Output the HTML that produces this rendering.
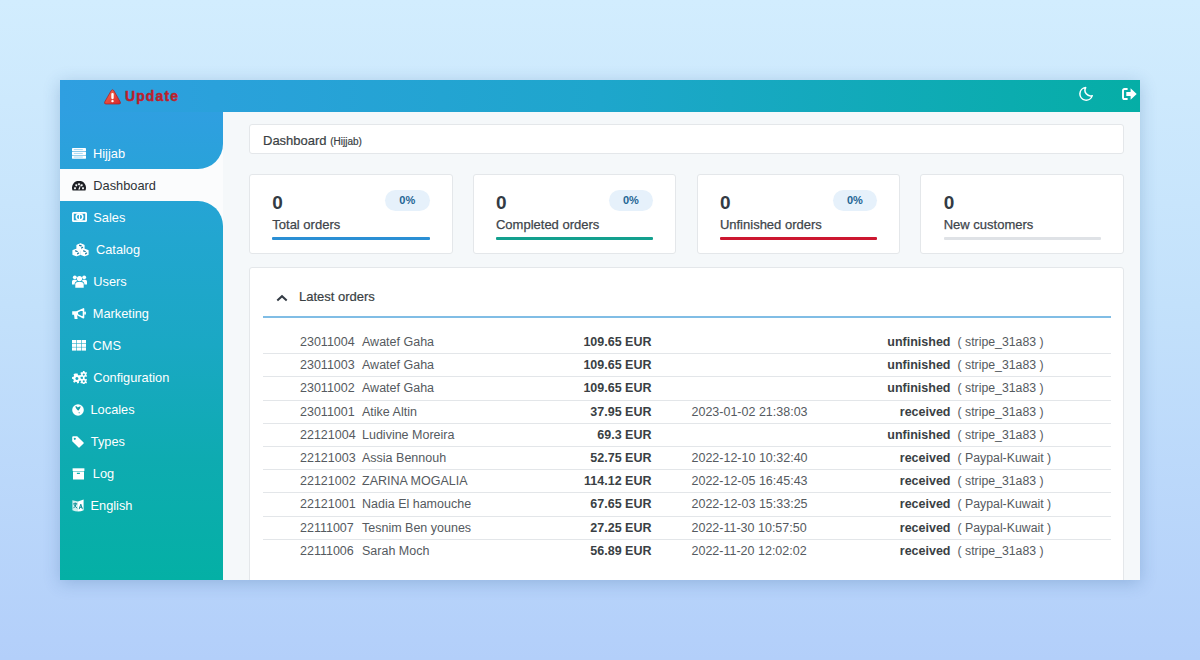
<!DOCTYPE html>
<html><head><meta charset="utf-8">
<style>
*{box-sizing:border-box;margin:0;padding:0}
html,body{width:1200px;height:660px;overflow:hidden}
body{font-family:"Liberation Sans",sans-serif;background:linear-gradient(to bottom,#d2edfe 0%,#c3e1fb 46%,#b3cffa 100%);position:relative}
#win{position:absolute;left:60px;top:80px;width:1080px;height:500px;background:#f5f8fa;box-shadow:0 3px 16px rgba(30,80,140,.24);overflow:hidden}
#hdr{position:absolute;left:0;top:0;width:1080px;height:31.5px;z-index:2;background:linear-gradient(to right,#2f9fe1 0%,#1ea6cc 50%,#05aea6 100%)}
#side{position:absolute;left:0;top:31px;width:163px;height:469px;background:#fbfcfd}
#side .blk{position:absolute;left:0;width:163px;background:linear-gradient(to bottom,#2f9fe1 0%,#22a6d0 27%,#1aa8c4 50%,#0eabb1 74%,#04b0a5 100%);background-size:163px 469px;background-repeat:no-repeat}
#side .top{top:0;height:58px;border-bottom-right-radius:25px;background-position:0 0}
#side .bot{top:90px;height:379px;border-top-right-radius:25px;background-position:0 -90px}
.upd{position:absolute;left:44px;top:8.8px;height:16px;display:flex;align-items:center}
.upd span{color:#bd1f2c;font-weight:bold;font-size:14px;letter-spacing:1.1px;margin-left:4px;line-height:16px;-webkit-text-stroke:.45px #bd1f2c;position:relative;top:-.8px}
.mi{position:absolute;left:12px;height:20px;display:flex;align-items:center;color:#fff;font-size:12.8px;white-space:nowrap;line-height:20px}
.mi svg{display:block;flex:none}
.mi span{position:relative;top:1px}
.hi{position:absolute}
.hi svg{display:block}
#main{position:absolute;left:189px;top:44px;width:875px}
.crumb{position:absolute;left:0;top:0;width:875px;height:30px;background:#fff;border:1px solid #e4e7ea;border-radius:3px;font-size:13px;color:#3a3f44;padding-left:13px;line-height:30px;padding-top:1px;-webkit-text-stroke:.2px #3a3f44}
.crumb small{font-size:10px}
.card{position:absolute;top:49.7px;width:203.6px;height:80.7px;background:#fff;border:1px solid #e4e7ea;border-radius:3px}
.card .n{position:absolute;left:22.3px;top:17px;font-size:19px;font-weight:bold;color:#333b44;line-height:22px}
.card .l{position:absolute;left:22.3px;top:41px;font-size:13px;color:#40454b;line-height:18px;-webkit-text-stroke:.25px #40454b}
.card .b{position:absolute;left:22.3px;top:62.4px;width:157.5px;height:3.2px;border-radius:1px}
.card .p{position:absolute;left:135px;top:15.5px;width:44.5px;height:20.5px;border-radius:10.5px;background:#e6f1fb;color:#1f6594;font-size:11px;font-weight:bold;text-align:center;line-height:21.6px}
.orders{position:absolute;left:0;top:143px;width:875px;height:400px;background:#fff;border:1px solid #e4e7ea;border-radius:3px}
.oh{position:absolute;left:49px;top:20px;font-size:13px;color:#3a3f44;line-height:18px;-webkit-text-stroke:.2px #3a3f44}
.chev{position:absolute;left:26px;top:26px}
.bl{position:absolute;left:13px;top:48px;width:848px;height:1.6px;background:#80bde5}
.rows{position:absolute;left:13px;top:63px;width:848px}
.r{position:relative;height:23.2px;border-bottom:1px solid #e3e6e9;font-size:12.5px;color:#555a60;line-height:23.2px;white-space:nowrap}
.r:last-child{border-bottom:none}
.r span{position:absolute;top:0}
.r .id{left:37px}
.r .nm{left:99px}
.r .am{right:459.5px;font-weight:bold;color:#3a3f44}
.r .dt{left:428.5px}
.r .st{right:160.5px;font-weight:bold;color:#3a3f44}
.r .pm{left:694.5px;font-size:12.3px}
</style></head>
<body>
<div id="win">
  <div id="hdr">
    <div class="upd"><svg width="17" height="16" viewBox="0 0 17 16"><defs><linearGradient id="wg" x1="0" y1="0" x2="1" y2="1"><stop offset="0" stop-color="#f4704f"/><stop offset="1" stop-color="#d9252a"/></linearGradient></defs><path d="M7.2 1.6 Q8.5 -0.2 9.8 1.6 L16.3 13 Q17 15 15 15 H2 Q0 15 0.7 13 Z" fill="url(#wg)" stroke="#a91c22" stroke-width="0.7"/><rect x="7.3" y="4" width="2.4" height="6.2" rx="1.1" fill="#fff"/><rect x="7.3" y="11" width="2.4" height="2.3" rx="1.1" fill="#fff"/></svg><span>Update</span></div>
    <div class="hi" style="left:1018.5px;top:6.3px"><svg width="15" height="15" viewBox="0 0 15 15"><path d="M6.68 1.62 A6.3 6.3 0 1 0 13.25 9.65 A5.6 5.6 0 0 1 6.68 1.62 Z" fill="none" stroke="#fff" stroke-width="1.5" stroke-linejoin="round"/></svg></div>
    <div class="hi" style="left:1061.5px;top:7.6px"><svg width="15" height="12" viewBox="0 0 15 12"><path d="M5.6 1 H2.6 Q1 1 1 2.6 V9.4 Q1 11 2.6 11 H5.6" fill="none" stroke="#fff" stroke-width="1.9"/><path d="M4.3 3.9 H8.6 V0.3 L14.7 6 L8.6 11.7 V8.1 H4.3 Z" fill="#fff"/></svg></div>
  </div>
  <div id="side">
    <div class="blk top"></div>
    <div class="blk bot"></div>
    <div class="mi" style="top:32.3px;color:#fff"><svg width="14" height="11" viewBox="0 0 14 11"><g fill="#fff"><rect x="0" y="0" width="14" height="3.2" rx=".4"/><rect x="0" y="3.7" width="14" height="3.2" rx=".4"/><rect x="0" y="7.4" width="14" height="3.3" rx=".4"/></g><g fill="#9fd3f1"><rect x="1.8" y="1.2" width="9" height=".9"/><rect x="1.8" y="4.9" width="9" height=".9"/><rect x="1.8" y="8.6" width="9" height=".9"/></g></svg><span style="position:absolute;left:21.0px">Hijjab</span></div>
<div class="mi" style="top:64.3px;color:#2e3338"><svg style="position:relative;top:1px" width="14" height="10" viewBox="0 0 14 10"><path fill-rule="evenodd" fill="#1d1f24" d="M0.6 9.6 A7 7 0 1 1 13.4 9.6 Z M3 6.2 a1 1 0 1 0 .01 0 Z M4.3 3.2 a1 1 0 1 0 .01 0Z M7 2.2 a1 1 0 1 0 .01 0Z M9.7 3.2 a1 1 0 1 0 .01 0Z M11 6.2 a1 1 0 1 0 .01 0Z M6.2 8.4 L8.6 3.6 L7.9 8.6 Z"/></svg><span style="position:absolute;left:21.3px">Dashboard</span></div>
<div class="mi" style="top:96.3px;color:#fff"><svg width="15" height="10" viewBox="0 0 15 10"><g fill="none" stroke="#fff"><rect x="0.9" y="0.9" width="13.2" height="8.2" rx=".6" stroke-width="1.8"/><ellipse cx="7.5" cy="5" rx="3.3" ry="2.9" stroke-width="1.5"/><path d="M7.5 2.4 V7.6" stroke-width="1.2"/></g></svg><span style="position:absolute;left:21.3px">Sales</span></div>
<div class="mi" style="top:128.3px;color:#fff"><svg style="position:relative;top:.8px" width="17" height="14" viewBox="0 0 17 14"><g fill="#fff" stroke="#fff" stroke-width="1.2" stroke-linejoin="round"><path d="M8.5 0.8 L12 2.2 V5.8 L8.5 7.2 L5 5.8 V2.2 Z"/><path d="M4.5 6.2 L8 7.6 V11.4 L4.5 12.8 L1 11.4 V7.6 Z"/><path d="M12.5 6.2 L16 7.6 V11.4 L12.5 12.8 L9 11.4 V7.6 Z"/></g><g stroke="#17789e" stroke-width="1.25" stroke-linecap="round"><path d="M7.6 2.3 L9.2 2.9"/><path d="M9.6 5 L10.6 4.3"/><path d="M3.6 7.9 L5.2 8.5"/><path d="M5.6 10.8 L6.6 10.1"/><path d="M11.6 7.9 L13.2 8.5"/><path d="M13.6 10.8 L14.6 10.1"/></g></svg><span style="position:absolute;left:24.0px">Catalog</span></div>
<div class="mi" style="top:160.3px;color:#fff"><svg width="15" height="13" viewBox="0 0 15 13"><g fill="#fff"><circle cx="7.5" cy="3.6" r="2.6"/><path d="M3.3 12.8 V9.6 Q3.3 6.9 6 6.9 H9 Q11.7 6.9 11.7 9.6 V12.8 Z"/><circle cx="2.8" cy="2.3" r="1.9"/><circle cx="12.2" cy="2.3" r="1.9"/><path d="M0 9.6 V6.6 Q0 4.8 1.8 4.8 H4.2 Q4.6 5.4 5.2 6 Q2.6 6.6 2.6 9.6 Z"/><path d="M15 9.6 V6.6 Q15 4.8 13.2 4.8 H10.8 Q10.4 5.4 9.8 6 Q12.4 6.6 12.4 9.6 Z"/></g></svg><span style="position:absolute;left:21.3px">Users</span></div>
<div class="mi" style="top:192.3px;color:#fff"><svg width="14" height="11" viewBox="0 0 14 11"><g fill="#fff"><path d="M0.2 3.2 H5.2 V6.8 H5 L5.6 10.9 H2.6 L2 6.8 H0.2 Z"/></g><path d="M5.3 3.8 L11.5 0.9 V9.7 L5.3 6.6 Z" fill="none" stroke="#fff" stroke-width="1.6" stroke-linejoin="round"/><rect x="12.2" y="3.6" width="1.7" height="3.2" rx=".8" fill="#fff"/></svg><span style="position:absolute;left:20.8px">Marketing</span></div>
<div class="mi" style="top:224.3px;color:#fff"><svg width="14" height="11" viewBox="0 0 14 11"><g fill="#fff"><rect x="0" y="0" width="4.3" height="3.2"/><rect x="4.85" y="0" width="4.3" height="3.2"/><rect x="9.7" y="0" width="4.3" height="3.2"/><rect x="0" y="3.7" width="4.3" height="3.2"/><rect x="4.85" y="3.7" width="4.3" height="3.2"/><rect x="9.7" y="3.7" width="4.3" height="3.2"/><rect x="0" y="7.4" width="4.3" height="3.2"/><rect x="4.85" y="7.4" width="4.3" height="3.2"/><rect x="9.7" y="7.4" width="4.3" height="3.2"/></g></svg><span style="position:absolute;left:20.5px">CMS</span></div>
<div class="mi" style="top:256.3px;color:#fff"><svg width="15" height="13" viewBox="0 0 15 13"><g fill="#fff" fill-rule="evenodd"><path d="M3.9 2.6 L5.6 2.5 L6 3.9 L7 4.5 L8.3 3.8 L9.4 5.1 L8.5 6.2 L8.7 7.4 L9.9 8.2 L9.3 9.8 L7.8 9.6 L6.9 10.5 L7 12 L5.3 12.4 L4.8 11 L3.6 10.8 L2.4 11.8 L1.1 10.7 L1.8 9.4 L1.4 8.2 L0 7.8 L0.1 6.1 L1.6 5.8 L2.1 4.7 L1.5 3.5 L2.8 2.5 Z M4.9 6.1 a1.5 1.5 0 1 0 .01 0Z"/><path d="M11 0 L12.5 0 L12.7 1.1 L13.5 1.6 L14.5 1.1 L15 2.3 L14.3 3.1 L14.3 4 L15 4.7 L14.4 5.9 L13.4 5.5 L12.6 6.1 L12.4 7.1 L11 7.1 L10.8 6.1 L10 5.5 L9 5.9 L8.4 4.7 L9.1 4 L9.1 3.1 L8.4 2.3 L9 1.1 L10 1.6 L10.8 1.1 Z M11.75 2.6 a1 1 0 1 0 .01 0Z"/><path d="M11 6.6 L12.5 6.6 L12.7 7.7 L13.5 8.2 L14.5 7.7 L15 8.9 L14.3 9.7 L14.3 10.6 L15 11.3 L14.4 12.5 L13.4 12.1 L12.6 12.7 L12.4 13 L11 13 L10.8 12.7 L10 12.1 L9 12.5 L8.4 11.3 L9.1 10.6 L9.1 9.7 L8.4 8.9 L9 7.7 L10 8.2 L10.8 7.7 Z M11.75 9.2 a1 1 0 1 0 .01 0Z"/></g></svg><span style="position:absolute;left:21.2px">Configuration</span></div>
<div class="mi" style="top:288.3px;color:#fff"><svg style="position:relative;top:.9px" width="12" height="12" viewBox="0 0 12 12"><circle cx="6" cy="6" r="5.8" fill="#fff"/><path d="M3.2 2.6 Q4.6 1.8 5.8 3.6 Q7.4 2 8.8 2.6 Q8 5.2 6.2 6.8 Q4.2 5.2 3.2 2.6 Z M6.6 8.2 Q7.6 8 8 8.8 Q7.4 9.6 6.8 9.2 Z" fill="#139ea6"/></svg><span style="position:absolute;left:18.5px">Locales</span></div>
<div class="mi" style="top:320.3px;color:#fff"><svg style="position:relative;top:1px" width="12" height="12" viewBox="0 0 12 12"><path fill-rule="evenodd" fill="#fff" d="M0.2 1.2 Q0.2 0.2 1.2 0.2 H5.2 L11.6 6.6 Q12 7 11.6 7.4 L7.4 11.6 Q7 12 6.6 11.6 L0.2 5.2 Z M2.8 1.8 a1 1 0 1 0 .01 0 Z"/></svg><span style="position:absolute;left:18.8px">Types</span></div>
<div class="mi" style="top:352.3px;color:#fff"><svg style="position:relative;top:1px" width="13" height="12" viewBox="0 0 13 12"><path fill="#fff" d="M0.6 0.3 H12.4 V3 H0.6 Z"/><path fill="#fff" fill-rule="evenodd" d="M1 3.5 H12 V11.6 H1 Z M4.9 4.8 H7.9 V5.9 H4.9 Z"/></svg><span style="position:absolute;left:20.8px">Log</span></div>
<div class="mi" style="top:384.3px;color:#fff"><svg width="12" height="13" viewBox="0 0 12 13"><path d="M0.4 1.2 L6 2.6 V12.6 Q3 12.4 0.4 11.2 Z" fill="#fff" opacity=".82"/><path d="M6 2.6 L11.6 0.6 V11.2 Q9 12.4 6 12.6 Z" fill="#fff"/><g stroke="#0c8f98" stroke-width="1" fill="none" stroke-linecap="round"><path d="M1.6 4.8 H4.8 M3.2 3.9 V4.8 M4.2 5 Q3.6 7.8 1.7 9 M2.3 5.8 Q3.1 8 4.9 9"/><path d="M7.3 9.8 L8.8 5.2 L10.3 9.8 M7.8 8.3 H9.8"/></g></svg><span style="position:absolute;left:18.5px">English</span></div>
  </div>
  <div id="main">
    <div class="crumb">Dashboard <small>(Hijjab)</small></div>
    <div class="card" style="left:0"><div class="n">0</div><div class="p">0%</div><div class="l">Total orders</div><div class="b" style="background:#2a8fd4"></div></div>
    <div class="card" style="left:223.7px"><div class="n">0</div><div class="p">0%</div><div class="l">Completed orders</div><div class="b" style="background:#13a08e"></div></div>
    <div class="card" style="left:447.6px"><div class="n">0</div><div class="p">0%</div><div class="l">Unfinished orders</div><div class="b" style="background:#cc1730"></div></div>
    <div class="card" style="left:671.4px"><div class="n">0</div><div class="l">New customers</div><div class="b" style="background:#dfe2e6"></div></div>
    <div class="orders">
      <svg class="chev" width="12" height="8" viewBox="0 0 12 8"><path d="M1.3 6.6 L6 2.2 L10.7 6.6" fill="none" stroke="#333b44" stroke-width="2"/></svg>
      <div class="oh">Latest orders</div>
      <div class="bl"></div>
      <div class="rows">
        <div class="r"><span class="id">23011004</span><span class="nm">Awatef Gaha</span><span class="am">109.65 EUR</span><span class="st">unfinished</span><span class="pm">( stripe_31a83 )</span></div>
<div class="r"><span class="id">23011003</span><span class="nm">Awatef Gaha</span><span class="am">109.65 EUR</span><span class="st">unfinished</span><span class="pm">( stripe_31a83 )</span></div>
<div class="r"><span class="id">23011002</span><span class="nm">Awatef Gaha</span><span class="am">109.65 EUR</span><span class="st">unfinished</span><span class="pm">( stripe_31a83 )</span></div>
<div class="r"><span class="id">23011001</span><span class="nm">Atike Altin</span><span class="am">37.95 EUR</span><span class="dt">2023-01-02 21:38:03</span><span class="st">received</span><span class="pm">( stripe_31a83 )</span></div>
<div class="r"><span class="id">22121004</span><span class="nm">Ludivine Moreira</span><span class="am">69.3 EUR</span><span class="st">unfinished</span><span class="pm">( stripe_31a83 )</span></div>
<div class="r"><span class="id">22121003</span><span class="nm">Assia Bennouh</span><span class="am">52.75 EUR</span><span class="dt">2022-12-10 10:32:40</span><span class="st">received</span><span class="pm">( Paypal-Kuwait )</span></div>
<div class="r"><span class="id">22121002</span><span class="nm">ZARINA MOGALIA</span><span class="am">114.12 EUR</span><span class="dt">2022-12-05 16:45:43</span><span class="st">received</span><span class="pm">( stripe_31a83 )</span></div>
<div class="r"><span class="id">22121001</span><span class="nm">Nadia El hamouche</span><span class="am">67.65 EUR</span><span class="dt">2022-12-03 15:33:25</span><span class="st">received</span><span class="pm">( Paypal-Kuwait )</span></div>
<div class="r"><span class="id">22111007</span><span class="nm">Tesnim Ben younes</span><span class="am">27.25 EUR</span><span class="dt">2022-11-30 10:57:50</span><span class="st">received</span><span class="pm">( Paypal-Kuwait )</span></div>
<div class="r"><span class="id">22111006</span><span class="nm">Sarah Moch</span><span class="am">56.89 EUR</span><span class="dt">2022-11-20 12:02:02</span><span class="st">received</span><span class="pm">( stripe_31a83 )</span></div>
      </div>
    </div>
  </div>
</div>
</body></html>
